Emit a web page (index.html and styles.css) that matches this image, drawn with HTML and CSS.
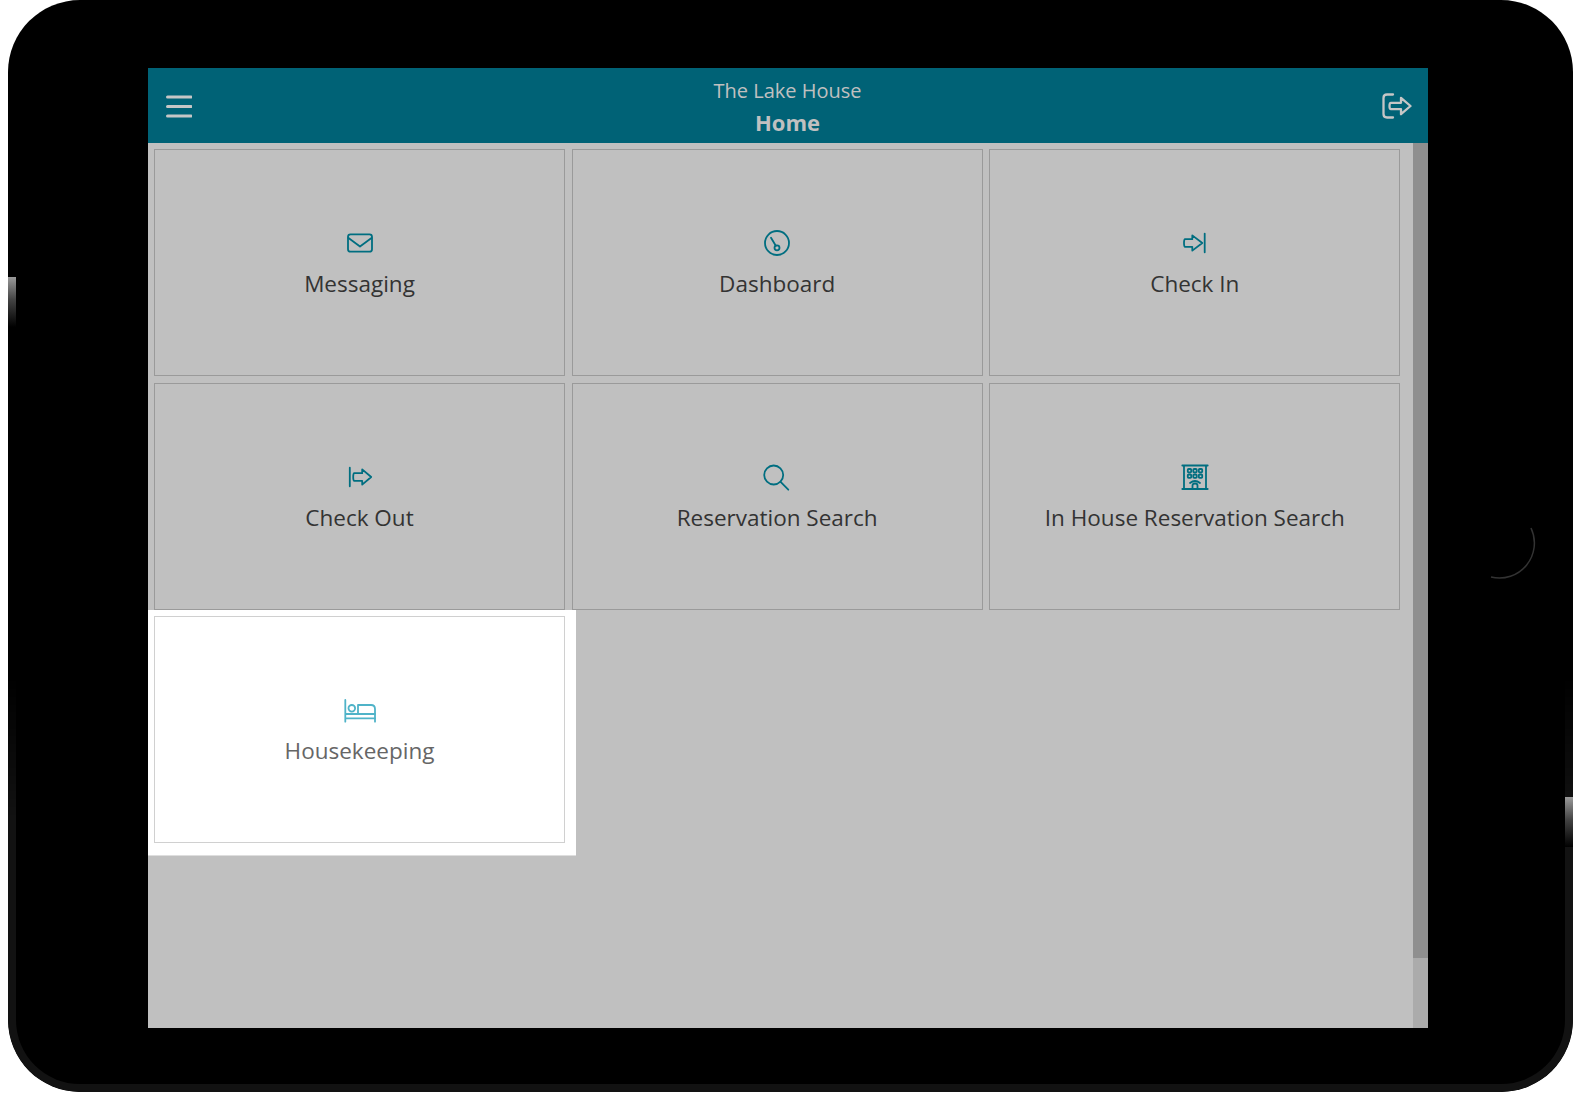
FILE: index.html
```html
<html>

<head>
    <meta charset="UTF-8" />
    <title>The Lake House - Home</title>
    <link rel="stylesheet" href="styles.css">
</head>

<body>
    <div class="tablet">
        <div class="side-key key-left"></div>
        <div class="side-key key-right"></div>
        <svg class="home-key" width="80" height="80" viewBox="0 0 80 80">
            <path d="M74 26A35 35 0 0 1 34 75" />
        </svg>

        <div class="screen">
            <header class="topbar">
                <svg class="bar-icon" width="26" height="24" viewBox="0 0 26 24">
                    <path d="M1.5 3H25M1.5 12.500H25M1.500 22H25" />
                </svg>
                <div class="topbar-title">
                    <div class="property">The Lake House</div>
                    <div class="page-name">Home</div>
                </div>
                <svg class="bar-icon bar-icon-thin" width="30" height="26" viewBox="0 0 30 26">
                    <path d="M11 1.500H5Q1.500 1.500 1.500 5V21Q1.500 24.500 5 24.500H11" />
                    <path d="M9 9.800H19V4.800L28.500 13L19 21.200V16.200H9Q7.500 16.200 7.500 13Q7.500 9.800 9 9.800Z" />
                </svg>
            </header>

            <div class="body-row">
                <main class="tiles">
                    <a class="tile">
                        <svg class="icon" viewBox="-16 -16 32 32">
                            <rect x="-12" y="-8.700" width="24" height="17.400" rx="2.500" />
                            <path d="M-11.500 -5L0 3.500L11.500 -5" />
                        </svg>
                        <span class="label">Messaging</span>
                    </a>
                    <a class="tile">
                        <svg class="icon" viewBox="-16 -16 32 32">
                            <circle cx="0" cy="0" r="12" />
                            <path d="M-6 -5.200L-1.200 2.700" />
                            <circle cx="0" cy="4.800" r="2.500" />
                        </svg>
                        <span class="label">Dashboard</span>
                    </a>
                    <a class="tile">
                        <svg class="icon" viewBox="-16 -16 32 32">
                            <path d="M-10 -3.800H-2.700V-7.600L7.300 0L-2.700 7.600V3.800H-10Q-11 3.800 -11 0Q-11 -3.800 -10 -3.800Z" />
                            <path d="M9.700 -9.300V9.300" />
                        </svg>
                        <span class="label">Check In</span>
                    </a>
                    <a class="tile">
                        <svg class="icon" viewBox="-16 -16 32 32">
                            <path d="M-10.200 -9.300V9.300" />
                            <path d="M-5.800 -3.800H2.200V-7.600L11.200 0L2.200 7.600V3.800H-5.800Q-6.800 3.800 -6.800 0Q-6.800 -3.800 -5.800 -3.800Z" />
                        </svg>
                        <span class="label">Check Out</span>
                    </a>
                    <a class="tile">
                        <svg class="icon" viewBox="-16 -16 32 32">
                            <circle cx="-3.300" cy="-2" r="9.500" />
                            <path d="M3.600 4.800L11.300 12.700" />
                        </svg>
                        <span class="label">Reservation Search</span>
                    </a>
                    <a class="tile">
                        <svg class="icon" viewBox="-16 -16 32 32">
                            <path d="M-12.700 -11.500H12.700M-12.700 12H12.700M-11 -11.500V12M11 -11.500V12" />
                            <rect x="-7.200" y="-8" width="3.400" height="3.400" rx="0.800" />
                            <rect x="-1.700" y="-8" width="3.400" height="3.400" rx="0.800" />
                            <rect x="3.800" y="-8" width="3.400" height="3.400" rx="0.800" />
                            <rect x="-7.200" y="-2.500" width="3.400" height="3.400" rx="0.800" />
                            <rect x="-1.700" y="-2.500" width="3.400" height="3.400" rx="0.800" />
                            <rect x="3.800" y="-2.500" width="3.400" height="3.400" rx="0.800" />
                            <path d="M-2.500 12V8.500Q-2.500 6.500 0 6.500Q2.500 6.500 2.500 8.500V12M-5 6Q0 2 5 6" />
                        </svg>
                        <span class="label">In House Reservation Search</span>
                    </a>
                    <div class="spotlight">
                        <a class="tile tile-active">
                            <svg class="icon" viewBox="-16 -16 32 32">
                                <path d="M-14.700 -10V11.700M-14.700 4H15M-14.700 8.300H15" />
                                <circle cx="-8.200" cy="-1.700" r="3.300" />
                                <path d="M-2 4V-5H11Q15 -5 15 -1V11.700" />
                            </svg>
                            <span class="label">Housekeeping</span>
                        </a>
                    </div>
                </main>
                <div class="scrollbar">
                    <div class="scroll-thumb"></div>
                </div>
            </div>
        </div>
    </div>
</body>

</html>
```

FILE: styles.css
```css
html,
body {
    margin: 0;
    padding: 0;
    height: 1095px;
    overflow: hidden;
    background-color: #fff;
}

body {
    font-family: 'Open Sans', sans-serif;
}

.tablet {
    position: relative;
    box-sizing: border-box;
    width: 1565px;
    height: 1092px;
    margin-left: 8px;
    padding: 68px 0 0 140px;
    background-color: #000;
    border-radius: 72px;
    overflow: hidden;
}

/* Lighter rim, only visible on the lower half of the device */
.tablet::before {
    content: "";
    position: absolute;
    top: 0;
    left: 0;
    right: 0;
    bottom: 0;
    border: 8px solid #121212;
    border-top: 0;
    border-radius: 72px;
    -webkit-mask-image: linear-gradient(to bottom, transparent 62%, #000 75%);
    mask-image: linear-gradient(to bottom, transparent 62%, #000 75%);
}

.side-key {
    position: absolute;
    width: 8px;
    height: 50px;
    background: linear-gradient(to bottom, #9a9a9a, #444 45%, #000);
}

.key-left {
    left: 0;
    top: 277px;
}

.key-right {
    right: 0;
    top: 797px;
}

.home-key {
    position: absolute;
    left: 1449px;
    top: 502px;
    fill: none;
    stroke: #333;
    stroke-width: 1.5;
}

.screen {
    position: relative;
    width: 1280px;
    height: 960px;
    display: flex;
    flex-direction: column;
    background-color: #c0c0c0;
}

.topbar {
    height: 75px;
    flex: none;
    display: flex;
    align-items: center;
    justify-content: space-between;
    padding: 0 16px 0 18px;
    background-color: #006276;
}

.bar-icon {
    display: block;
    fill: none;
    stroke: #c6c6c6;
    stroke-width: 3;
    stroke-linecap: round;
    stroke-linejoin: round;
}

.bar-icon-thin {
    stroke-width: 2.300;
}

.topbar-title {
    text-align: center;
    color: #c0c0c0;
    padding: 4px 0 0 1px;
}

.property {
    font-size: 20px;
    line-height: 30px;
}

.page-name {
    font-size: 22px;
    font-weight: 700;
    line-height: 33px;
}

.body-row {
    flex: 1;
    display: flex;
    min-height: 0;
}

.tiles {
    flex: 1;
    box-sizing: border-box;
    padding: 6px;
    display: grid;
    grid-template-columns: repeat(3, 411px);
    grid-auto-rows: 227px;
    gap: 6.670px;
    align-content: start;
}

.tile {
    box-sizing: border-box;
    height: 227px;
    display: flex;
    flex-direction: column;
    align-items: center;
    padding-top: 77px;
    border: 1px solid #9a9a9a;
    color: #333;
}

.icon {
    display: block;
    width: 32px;
    height: 32px;
    fill: none;
    stroke: #006e80;
    stroke-width: 1.800;
    stroke-linecap: round;
    stroke-linejoin: round;
}

.label {
    font-size: 22.500px;
    line-height: 32px;
    margin-top: 9px;
}

.spotlight {
    margin: -6px -11px -13px -6px;
    padding: 6px 11px 12px 6px;
    background-color: #fff;
    border-bottom: 1px solid #dedede;
}

.tile-active {
    background-color: #fff;
    border-color: #d0d0d0;
    color: #666;
}

.tile-active .icon {
    stroke: #4fb3c8;
}

.scrollbar {
    width: 15px;
    flex: none;
    background-color: #ababab;
}

.scroll-thumb {
    height: 815px;
    background-color: #8f8f8f;
}
```
